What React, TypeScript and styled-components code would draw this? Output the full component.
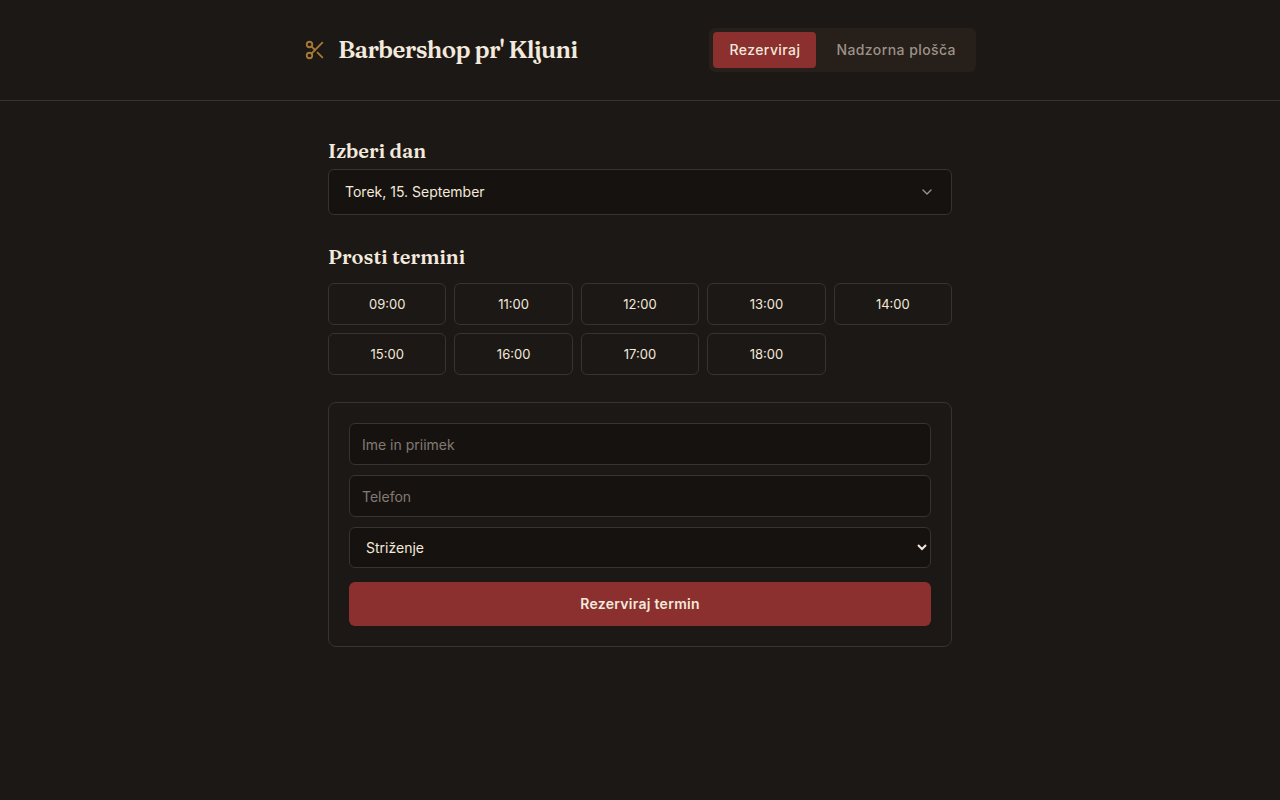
import React, { useState } from "react";
import styled, { createGlobalStyle, css } from "styled-components";
import { ChevronDown, Scissors } from "lucide-react";

const color = {
  page: "#1c1815",
  field: "#16120f",
  raised: "#261f1a",
  line: "#38332d",
  cream: "#f3e9dc",
  muted: "#9c9288",
  hint: "#827a72",
  red: "#8b2f2f",
  gold: "#a87932",
};

const sans = `Inter, "Liberation Sans", sans-serif`;
const serif = `Fraunces, "Liberation Serif", serif`;

const GlobalStyle = createGlobalStyle`
  *, *::before, *::after { box-sizing: border-box; }
  body {
    margin: 0;
    background: ${color.page};
    color: ${color.cream};
    font-family: ${sans};
    font-size: 14px;
    line-height: 20px;
  }
  button, input, select { font: inherit; color: inherit; }
`;

const Header = styled.header`
  padding: 28px 24px;
  border-bottom: 1px solid ${color.line};
`;

const HeaderInner = styled.div`
  display: flex;
  align-items: center;
  justify-content: space-between;
  flex-wrap: wrap;
  gap: 16px;
  max-width: 672px;
  margin: 0 auto;
`;

const Brand = styled.div`
  display: flex;
  align-items: center;
  gap: 12px;
`;

const BrandIcon = styled(Scissors)`
  color: ${color.gold};
`;

const BrandName = styled.h1`
  margin: 0;
  font-family: ${serif};
  font-size: 24px;
  font-weight: 600;
  letter-spacing: -0.025em;
  line-height: 32px;
`;

const ViewSwitch = styled.nav`
  display: flex;
  gap: 4px;
  padding: 4px;
  border-radius: 6px;
  background: ${color.raised};
`;

const ViewButton = styled.button<{ $active: boolean }>`
  height: 36px;
  padding: 0 16px;
  border: 0;
  border-radius: 4px;
  font-weight: 500;
  letter-spacing: 0.03em;
  cursor: pointer;
  background: ${(p) => (p.$active ? color.red : "transparent")};
  color: ${(p) => (p.$active ? color.cream : color.muted)};
`;

const Main = styled.main`
  max-width: 672px;
  margin: 0 auto;
  padding: 34px 24px 48px;
`;

const SectionTitle = styled.h2`
  margin: 0 0 2px;
  font-family: ${serif};
  font-size: 20px;
  font-weight: 600;
  line-height: 32px;
`;

const fieldBox = css`
  width: 100%;
  border: 1px solid ${color.line};
  border-radius: 6px;
  background: ${color.field};
`;

const DayButton = styled.button`
  ${fieldBox}
  display: flex;
  align-items: center;
  justify-content: space-between;
  height: 46px;
  padding: 0 16px;
  margin-bottom: 26px;
  text-align: left;
  cursor: pointer;

  svg { color: ${color.muted}; }
`;

const SlotGrid = styled.div`
  display: grid;
  grid-template-columns: repeat(5, 1fr);
  gap: 8px;
  margin: 10px 0 27px;
`;

const SlotButton = styled.button<{ $active: boolean }>`
  height: 42px;
  padding: 0;
  border: 1px solid ${(p) => (p.$active ? color.red : color.line)};
  border-radius: 6px;
  background: ${(p) => (p.$active ? color.red : "transparent")};
  font-size: 13px;
  cursor: pointer;
`;

const BookingForm = styled.form`
  display: flex;
  flex-direction: column;
  gap: 10px;
  padding: 20px;
  border: 1px solid ${color.line};
  border-radius: 8px;
`;

const TextInput = styled.input`
  ${fieldBox}
  height: 42px;
  padding: 0 12px;

  &::placeholder { color: ${color.hint}; opacity: 1; }
`;

const ServiceSelect = styled.select`
  ${fieldBox}
  height: 41px;
  padding: 0 0 0 12px;
`;

const SubmitButton = styled.button`
  height: 44px;
  margin-top: 4px;
  border: 0;
  border-radius: 6px;
  background: ${color.red};
  font-weight: 600;
  letter-spacing: 0.02em;
  cursor: pointer;
`;

const slots = ["09:00", "11:00", "12:00", "13:00", "14:00", "15:00", "16:00", "17:00", "18:00"];
const views = ["Rezerviraj", "Nadzorna plošča"];

export default function App() {
  const [view, setView] = useState(views[0]);
  const [slot, setSlot] = useState<string | null>(null);

  return (
    <>
      <GlobalStyle />
      <Header>
        <HeaderInner>
          <Brand>
            <BrandIcon size={22} strokeWidth={2} aria-hidden />
            <BrandName>Barbershop pr' Kljuni</BrandName>
          </Brand>
          <ViewSwitch>
            {views.map((v) => (
              <ViewButton key={v} type="button" $active={v === view} onClick={() => setView(v)}>
                {v}
              </ViewButton>
            ))}
          </ViewSwitch>
        </HeaderInner>
      </Header>
      <Main>
        <SectionTitle id="day-title">Izberi dan</SectionTitle>
        <DayButton type="button" aria-describedby="day-title" aria-haspopup="listbox">
          <span>Torek, 15. September</span>
          <ChevronDown size={16} aria-hidden />
        </DayButton>
        <SectionTitle>Prosti termini</SectionTitle>
        <SlotGrid>
          {slots.map((s) => (
            <SlotButton key={s} type="button" $active={s === slot} onClick={() => setSlot(s)}>
              {s}
            </SlotButton>
          ))}
        </SlotGrid>
        <BookingForm onSubmit={(e) => e.preventDefault()}>
          <TextInput type="text" name="name" placeholder="Ime in priimek" aria-label="Ime in priimek" />
          <TextInput type="tel" name="phone" placeholder="Telefon" aria-label="Telefon" />
          <ServiceSelect name="service" aria-label="Storitev">
            <option>Striženje</option>
          </ServiceSelect>
          <SubmitButton type="submit">Rezerviraj termin</SubmitButton>
        </BookingForm>
      </Main>
    </>
  );
}
